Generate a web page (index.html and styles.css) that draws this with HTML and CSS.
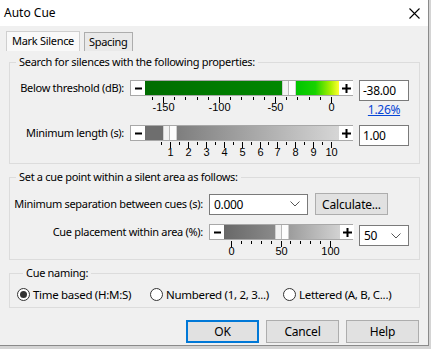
FILE: index.html
```html
<!DOCTYPE html>
<html lang="en">
<head>
    <meta charset="UTF-8">
    <title>Auto Cue</title>
    <link rel="stylesheet" href="styles.css">
</head>
<body>
    <div class="dialog">
        <div class="titlebar">
            <span class="title">Auto Cue</span>
            <svg class="close" width="11" height="11" viewBox="0 0 11 11">
                <path d="M0.5 0.5 L10.5 10.5 M10.5 0.5 L0.5 10.5" stroke="#000" stroke-width="1.1"/>
            </svg>
        </div>

        <div class="content">
            <div class="tabs">
                <div class="tab active">Mark Silence</div>
                <div class="tab">Spacing</div>
            </div>

            <!-- group 1 -->
            <fieldset class="group g1">
                <legend>Search for silences with the following properties:</legend>
                <div class="row row-slider">
                    <label class="lbl">Below threshold (dB):</label>
                    <div class="slider-col">
                        <div class="slider">
                            <span class="step"><svg width="7" height="7" viewBox="0 0 7 7"><rect x="0" y="2.5" width="7" height="2" fill="#000"/></svg></span>
                            <span class="seg" style="width:137px;background:linear-gradient(to right,#006c00,#008800)"></span>
                            <span class="thumb"></span>
                            <span class="seg" style="width:43px;background:linear-gradient(to right,#00c400,#18d200 45%,#a8f000 80%,#ffff30)"></span>
                            <span class="step"><svg width="9" height="9" viewBox="0 0 9 9"><rect x="0" y="3.5" width="9" height="2" fill="#000"/><rect x="3.5" y="0" width="2" height="9" fill="#000"/></svg></span>
                        </div>
                        <svg class="scale" width="223" height="18" id="scale-thr"></svg>
                    </div>
                    <div class="val-col">
                        <div class="textbox">-38.00</div>
                        <a class="link" href="#">1.26%</a>
                    </div>
                </div>
                <div class="row row-slider second">
                    <label class="lbl">Minimum length (s):</label>
                    <div class="slider-col">
                        <div class="slider">
                            <span class="step"><svg width="7" height="7" viewBox="0 0 7 7"><rect x="0" y="2.5" width="7" height="2" fill="#000"/></svg></span>
                            <span class="seg" style="width:18px;background:#6e6e6e"></span>
                            <span class="thumb"></span>
                            <span class="seg" style="width:162px;background:linear-gradient(to right,#7e7e7e,#d6d6d6)"></span>
                            <span class="step"><svg width="9" height="9" viewBox="0 0 9 9"><rect x="0" y="3.5" width="9" height="2" fill="#000"/><rect x="3.5" y="0" width="2" height="9" fill="#000"/></svg></span>
                        </div>
                        <svg class="scale" width="223" height="18" id="scale-len"></svg>
                    </div>
                    <div class="val-col">
                        <div class="textbox">1.00</div>
                    </div>
                </div>
            </fieldset>

            <!-- group 2 -->
            <fieldset class="group g2">
                <legend>Set a cue point within a silent area as follows:</legend>
                <div class="row row-sep">
                    <label class="lbl">Minimum separation between cues (s):</label>
                    <div class="combo wide">
                        <span>0.000</span>
                        <svg width="10" height="6" viewBox="0 0 10 6"><path d="M0.5 0.5 L5 5 L9.5 0.5" fill="none" stroke="#555" stroke-width="1"/></svg>
                    </div>
                    <button class="btn calc">Calculate...</button>
                </div>
                <div class="row row-place">
                    <label class="lbl">Cue placement within area (%):</label>
                    <div class="slider-col">
                        <div class="slider small">
                            <span class="step"><svg width="7" height="7" viewBox="0 0 7 7"><rect x="0" y="2.5" width="7" height="2" fill="#000"/></svg></span>
                            <span class="seg" style="width:51px;background:linear-gradient(to right,#686868,#8a8a8a)"></span>
                            <span class="thumb"></span>
                            <span class="seg" style="width:51px;background:linear-gradient(to right,#9c9c9c,#d2d2d2)"></span>
                            <span class="step"><svg width="9" height="9" viewBox="0 0 9 9"><rect x="0" y="3.5" width="9" height="2" fill="#000"/><rect x="3.5" y="0" width="2" height="9" fill="#000"/></svg></span>
                        </div>
                        <svg class="scale" width="144" height="18" id="scale-pl"></svg>
                    </div>
                    <div class="combo narrow">
                        <span>50</span>
                        <svg width="10" height="6" viewBox="0 0 10 6"><path d="M0.5 0.5 L5 5 L9.5 0.5" fill="none" stroke="#555" stroke-width="1"/></svg>
                    </div>
                </div>
            </fieldset>

            <!-- group 3 -->
            <fieldset class="group g3">
                <legend>Cue naming:</legend>
                <div class="radios">
                    <div class="radio checked"><span class="dot"></span>Time based (H:M:S)</div>
                    <div class="radio"><span class="dot"></span>Numbered (1, 2, 3...)</div>
                    <div class="radio"><span class="dot"></span>Lettered (A, B, C...)</div>
                </div>
            </fieldset>

            <div class="buttons">
                <button class="btn default">OK</button>
                <button class="btn">Cancel</button>
                <button class="btn">Help</button>
            </div>
        </div>
    </div>

    <script>
        // draw the tick marks of the slider scales
        function drawScale(id, ticks) {
            const svg = document.getElementById(id);
            let out = '';
            ticks.forEach(t => {
                const h = t.label !== undefined ? 6 : 3;
                out += `<rect x="${t.x}" y="1" width="1" height="${h}" fill="#000"/>`;
                if (t.label !== undefined) {
                    out += `<text x="${t.x + 0.5}" y="15" text-anchor="middle">${t.label}</text>`;
                }
            });
            svg.innerHTML = out;
        }

        let thr = [];
        for (let v = -160; v <= 0; v += 10) {
            const x = Math.round(33 + (v + 150) * 1.12);
            thr.push(v % 50 === 0 ? { x: x, label: v } : { x: x });
        }
        drawScale('scale-thr', thr);

        let len = [];
        for (let v = 0.5; v <= 10; v += 0.5) {
            const x = Math.round(40 + (v - 1) * 17.9);
            len.push(v % 1 === 0 ? { x: x, label: v } : { x: x });
        }
        drawScale('scale-len', len);

        let pl = [];
        for (let v = 0; v <= 100; v += 10) {
            const x = Math.round(22 + v * 0.99);
            pl.push(v % 50 === 0 ? { x: x, label: v } : { x: x });
        }
        drawScale('scale-pl', pl);
    </script>
</body>
</html>
```

FILE: styles.css
```css
body {
    margin: 0;
    background-color: #d4d4d4;
    font-family: "Noto Sans", "Open Sans", sans-serif;
    font-size: 11px;
    letter-spacing: -0.3px;
    color: #000;
}
.dialog {
    width: 428px;
    height: 345px;
    background-color: #f0f0f0;
    border-right: 1px solid #8a8a8a;
    border-bottom: 1px solid #8a8a8a;
}
.titlebar {
    height: 26px;
    background-color: #fff;
    display: flex;
    align-items: center;
    justify-content: space-between;
    padding: 0 8px 0 4px;
}
.title {
    font-size: 12px;
    line-height: 16px;
    letter-spacing: 0;
}
.close {
    display: block;
}
.content {
    padding: 5px 8px 0 9px;
}
.tabs {
    display: flex;
    align-items: flex-end;
    gap: 4px;
    margin-left: -3px;
    height: 20px;
}
.tab {
    box-sizing: border-box;
    height: 19px;
    padding: 0 4px;
    line-height: 17px;
    border: 1px solid #adadad;
    border-bottom: none;
    background-color: #e9e9e9;
}
.tab.active {
    height: 20px;
    padding: 0 5px;
    line-height: 18px;
    border-color: #cfcfcf;
    background-color: #f9f9f9;
}
.group {
    margin: 0;
    padding: 0;
    min-width: 0;
    border: 1px solid #dcdcdc;
}
.group legend {
    padding: 0 3px;
    margin-left: 6px;
    line-height: 16px;
}
.g1 {
    margin-top: 3px;
    padding: 10px 0 4px 0;
}
.g2 {
    margin-top: 5px;
    padding: 8px 0 1px 0;
}
.g3 {
    margin-top: 5px;
    padding: 5px 0 5px 7px;
}
.row {
    display: grid;
    column-gap: 6px;
}
.row-slider {
    grid-template-columns: 114px 223px 50px;
}
.row-slider.second {
    margin-top: 8px;
}
.lbl {
    text-align: right;
    line-height: 16px;
    white-space: nowrap;
}
.slider-col {
    display: flex;
    flex-direction: column;
}
.slider {
    display: flex;
    height: 14px;
    border: 1px solid #a8a8a8;
    background-color: #fff;
}
.step {
    width: 14px;
    flex: none;
    display: flex;
    align-items: center;
    justify-content: center;
    background-color: #fff;
}
.seg {
    flex: none;
    height: 14px;
}
.thumb {
    flex: none;
    box-sizing: border-box;
    width: 14px;
    height: 14px;
    border-left: 1px solid #cfcfcf;
    border-right: 1px solid #cfcfcf;
    background: linear-gradient(to right, #f2f2f2 0 5px, #b9b9b9 5px 6px, #fdfdfd 6px);
}
.scale {
    display: block;
    font-family: "Liberation Sans", sans-serif;
    font-size: 11px;
    letter-spacing: 0;
}
.val-col {
    display: flex;
    flex-direction: column;
    align-items: center;
}
.textbox {
    box-sizing: border-box;
    width: 50px;
    height: 21px;
    padding: 0 3px;
    line-height: 19px;
    font-size: 12px;
    background-color: #fff;
    border: 1px solid #7a7a7a;
}
.link {
    margin-top: 2px;
    color: #0645d6;
    text-decoration: underline;
    line-height: 14px;
    font-size: 12px;
}
.row-sep {
    grid-template-columns: 193px 99px auto;
    align-items: center;
}
.row-sep .calc {
    margin-left: 1px;
    justify-self: start;
}
.row-place {
    margin-top: 9px;
    grid-template-columns: 193px 144px 50px;
}
.row-place .combo {
    margin-top: 1px;
}
.combo {
    box-sizing: border-box;
    height: 21px;
    display: flex;
    align-items: center;
    justify-content: space-between;
    padding: 0 7px 0 4px;
    font-size: 12px;
    background-color: #fff;
    border: 1px solid #7a7a7a;
}
.combo.wide {
    width: 99px;
}
.combo.narrow {
    width: 50px;
}
.btn {
    box-sizing: border-box;
    width: 73px;
    height: 23px;
    font-family: inherit;
    font-size: 12px;
    letter-spacing: -0.2px;
    background-color: #e1e1e1;
    border: 1px solid #adadad;
    padding: 0;
    color: #000;
}
.btn.calc {
    height: 22px;
}
.btn.default {
    border: 2px solid #0078d7;
}
.radios {
    display: flex;
    align-items: center;
    height: 16px;
}
.radio {
    display: flex;
    align-items: center;
    gap: 3px;
    width: 133px;
    white-space: nowrap;
    font-size: 11.5px;
}
.dot {
    box-sizing: border-box;
    width: 13px;
    height: 13px;
    border: 1px solid #333;
    border-radius: 50%;
    background-color: #fff;
    flex: none;
    display: flex;
    align-items: center;
    justify-content: center;
}
.radio.checked .dot::after {
    content: "";
    width: 7px;
    height: 7px;
    border-radius: 50%;
    background-color: #333;
}
.buttons {
    display: flex;
    justify-content: flex-end;
    gap: 7px;
    margin-top: 12px;
    padding-right: 1px;
}
```
